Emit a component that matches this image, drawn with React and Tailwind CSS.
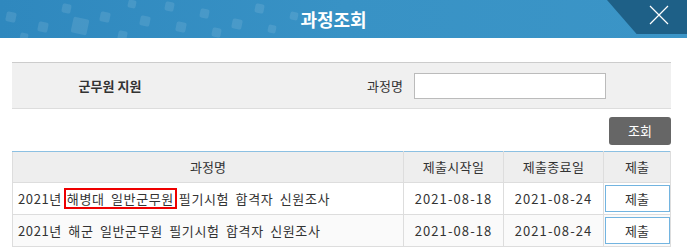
import { useState } from "react";

const font = { fontFamily: '"Noto Sans CJK KR", "Noto Sans", sans-serif' };

const squares = [
  [6, 12, 10], [38, 22, 10], [62, 4, 9], [72, 18, 16], [100, 12, 10], [128, 0, 8],
  [140, 16, 10], [165, 2, 9], [176, 22, 10], [118, 31, 9], [20, 33, 8], [200, 9, 9],
  [232, 19, 10], [212, 28, 9], [255, 4, 9], [268, 25, 8], [290, 12, 8],
];

const rows = [
  { pre: "2021년", mark: "해병대 일반군무원", post: "필기시험 합격자 신원조사", start: "2021-08-18", end: "2021-08-24" },
  { pre: "2021년 해군 일반군무원 필기시험 합격자 신원조사", start: "2021-08-18", end: "2021-08-24" },
];

export default function App() {
  const [keyword, setKeyword] = useState("");

  return (
    <div className="w-[687px] h-[248px] bg-white overflow-hidden text-[13px] text-[#333]" style={font}>
      {/* header */}
      <div className="relative h-[38px] bg-gradient-to-r from-[#2f88be] via-[#3892c5] to-[#3b95c7] overflow-hidden">
        {squares.map(([x, y, s], i) => (
          <span
            key={i}
            className="absolute rounded-[2px] bg-white/10 rotate-[12deg]"
            style={{ left: x, top: y, width: s, height: s }}
          />
        ))}
        <div className="absolute right-0 top-0 h-[34px] w-[80px] bg-[#1e6087] [clip-path:polygon(0_0,100%_0,100%_100%,37%_100%)]" />
        <div className="relative flex h-full items-center justify-center pr-[20px] text-[18px] font-bold text-white">
          과정조회
        </div>
        <button className="absolute right-[18px] top-[5px] h-[20px] w-[20px]">
          <svg viewBox="0 0 20 20" className="h-full w-full" stroke="white" strokeWidth="1.2" fill="none">
            <path d="M1 1L19 19M19 1L1 19" />
          </svg>
        </button>
      </div>

      <div className="pl-[12px] pr-[16px]">
        {/* search box */}
        <div className="mt-[24px] flex h-[47px] items-center border-y border-t-[#ccc] border-b-[#ddd] bg-[#f0f0f0]">
          <div className="w-[196px] text-center font-bold">군무원 지원</div>
          <div className="flex-1" />
          <span>과정명</span>
          <input
            value={keyword}
            onChange={(e) => setKeyword(e.target.value)}
            className="ml-[11px] mr-[65px] h-[26px] w-[192px] border border-[#bbb] bg-white px-2 outline-none"
          />
        </div>

        <div className="mt-[8px] flex justify-end">
          <button className="h-[28px] w-[62px] rounded-[3px] bg-[#666] text-[13px] text-white">조회</button>
        </div>

        {/* result table */}
        <table className="mt-[6px] w-[658px] table-fixed border-collapse border-t border-t-[#8cc0e2] text-center">
          <colgroup>
            <col className="w-[391px]" />
            <col className="w-[100px]" />
            <col className="w-[100px]" />
            <col className="w-[67px]" />
          </colgroup>
          <thead>
            <tr className="h-[31px] bg-[#eee]">
              <th className="border border-[#ddd] border-t-[#8cc0e2] font-normal">과정명</th>
              <th className="border border-[#ddd] border-t-[#8cc0e2] font-normal tracking-[0.3px]">제출시작일</th>
              <th className="border border-[#ddd] border-t-[#8cc0e2] font-normal tracking-[0.3px]">제출종료일</th>
              <th className="border border-[#ddd] border-t-[#8cc0e2] font-normal">제출</th>
            </tr>
          </thead>
          <tbody>
            {rows.map((r, i) => (
              <tr key={i} className={`h-[32px] ${i % 2 ? "bg-[#fafafa]" : "bg-white"}`}>
                <td className="border border-[#ddd] pl-[5px] text-left whitespace-nowrap tracking-[0.6px] [word-spacing:3px]">
                  {r.pre}
                  {r.mark && (
                    <>
                      <span className="mx-[2px] px-[3px] py-[1px] outline-2 outline-[#e00] -outline-offset-2">{r.mark}</span>
                      {r.post}
                    </>
                  )}
                </td>
                <td className="border border-[#ddd] tracking-[1.1px]">{r.start}</td>
                <td className="border border-[#ddd] tracking-[1.1px]">{r.end}</td>
                <td className="border border-[#ddd] p-0">
                  <button className="mx-auto block h-[27px] w-[65px] border border-[#72b4e0] bg-white text-[13px]">
                    제출
                  </button>
                </td>
              </tr>
            ))}
          </tbody>
        </table>
      </div>
    </div>
  );
}
